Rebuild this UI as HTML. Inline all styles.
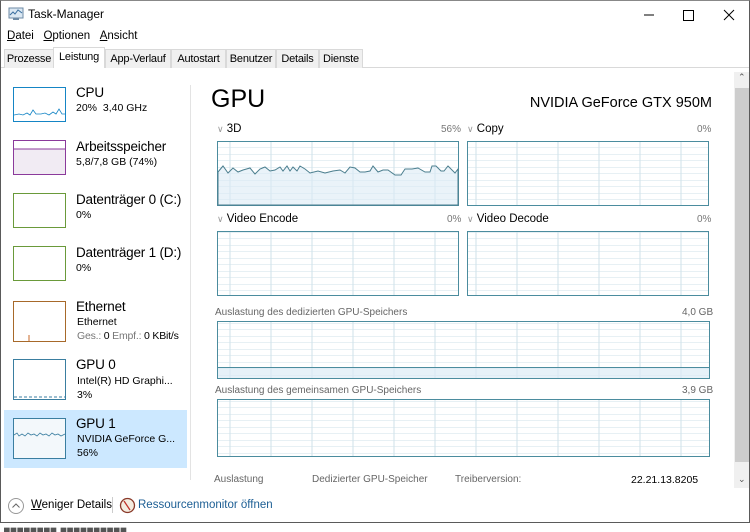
<!DOCTYPE html>
<html><head><meta charset="utf-8"><style>
*{margin:0;padding:0;box-sizing:border-box}
body{width:750px;height:528px;background:#fff;font-family:"Liberation Sans",sans-serif;color:#000;position:relative;overflow:hidden}
.a{position:absolute;white-space:nowrap}
.win{position:absolute;left:0;top:0;width:750px;height:523px;border:1px solid #5a5a5a;border-top:1px solid #888}
.tab{position:absolute;top:49px;height:19px;font-size:11px;padding-top:3px;text-align:center;border:1px solid #d9d9d9;border-bottom:none;background:#f0f0f0;letter-spacing:-0.2px}
.nm{font-size:13.5px;color:#000;letter-spacing:-0.2px}
.sb{font-size:10.5px;color:#000}
.lbl{font-size:11.5px}
.pc{font-size:10px;color:#777}
.sm{font-size:10px;color:#666}
</style></head><body>
<div class="win"></div>
<svg class="a" style="left:8px;top:7px" width="16" height="14"><rect x="1" y="1" width="14" height="10" fill="#dbe8f3" stroke="#6d8aa5"/><polyline points="2,8 5,5 7,7 10,3 14,6" fill="none" stroke="#3a6fa0"/><rect x="5" y="11" width="6" height="2" fill="#6d8aa5"/></svg>
<div class="a" style="left:28px;top:7px;font-size:12px">Task-Manager</div>
<svg class="a" style="left:640px;top:8px" width="100" height="14"><line x1="4" y1="7" x2="14" y2="7" stroke="#000"/><rect x="43.5" y="2.5" width="10" height="10" fill="none" stroke="#000"/><path d="M84 2 L94 12 M94 2 L84 12" stroke="#000"/></svg>
<div class="a" style="left:7px;top:30px;font-size:11.5px"><u>D</u>atei&nbsp;&nbsp;&nbsp;<u>O</u>ptionen&nbsp;&nbsp;&nbsp;<u>A</u>nsicht</div>
<div class="a" style="left:1px;top:67px;width:748px;height:1px;background:#d9d9d9"></div>
<div class="tab" style="left:4px;width:50px">Prozesse</div>
<div class="tab" style="left:53px;width:52px;top:47px;height:21px;background:#fff;padding-top:3px">Leistung</div>
<div class="tab" style="left:105px;width:66px">App-Verlauf</div>
<div class="tab" style="left:171px;width:55px">Autostart</div>
<div class="tab" style="left:226px;width:50px">Benutzer</div>
<div class="tab" style="left:276px;width:43px">Details</div>
<div class="tab" style="left:319px;width:44px">Dienste</div>
<div class="a" style="left:190px;top:85px;width:1px;height:395px;background:#e3e3e3"></div>
<div class="a" style="left:4px;top:410px;width:183px;height:58px;background:#cce8ff"></div>

<svg class="a" style="left:13px;top:87px" width="54" height="36"><rect x=".5" y=".5" width="52" height="34" fill="#fff" stroke="#1585c5"/><polyline points="1,28 6,27 10,28 14,26 17,28 20,23 23,27 28,27 32,26 36,28 40,25 43,27 46,22 49,27 52,27" fill="none" stroke="#1585c5" stroke-width=".8"/></svg>
<div class="a nm" style="left:76px;top:85px">CPU</div><div class="a sb" style="left:76px;top:102px">20%&nbsp; 3,40 GHz</div>

<svg class="a" style="left:13px;top:140px" width="54" height="36"><rect x=".5" y=".5" width="52" height="34" fill="#fff" stroke="#8b3a9b"/><rect x="1" y="9" width="51" height="25" fill="#f1ebf3"/><line x1="1" y1="9" x2="52" y2="9" stroke="#8b3a9b"/></svg>
<div class="a nm" style="left:76px;top:139px">Arbeitsspeicher</div><div class="a sb" style="left:76px;top:156px">5,8/7,8 GB (74%)</div>

<svg class="a" style="left:13px;top:193px" width="54" height="36"><rect x=".5" y=".5" width="52" height="34" fill="#fff" stroke="#6a9a3a"/></svg>
<div class="a nm" style="left:76px;top:192px">Datenträger 0 (C:)</div><div class="a sb" style="left:76px;top:209px">0%</div>
<svg class="a" style="left:13px;top:246px" width="54" height="36"><rect x=".5" y=".5" width="52" height="34" fill="#fff" stroke="#6a9a3a"/></svg>
<div class="a nm" style="left:76px;top:245px">Datenträger 1 (D:)</div><div class="a sb" style="left:76px;top:262px">0%</div>

<svg class="a" style="left:13px;top:301px" width="54" height="42"><rect x=".5" y=".5" width="52" height="40" fill="#fff" stroke="#a7692a"/><line x1="16" y1="34" x2="16" y2="40" stroke="#c86a2a"/></svg>
<div class="a nm" style="left:76px;top:299px">Ethernet</div><div class="a sb" style="left:77px;top:316px">Ethernet</div>
<div class="a sb" style="left:77px;top:330px;letter-spacing:-0.2px"><span style="color:#777">Ges.:</span> 0 <span style="color:#777">Empf.:</span> 0 KBit/s</div>

<svg class="a" style="left:13px;top:359px" width="54" height="42"><rect x=".5" y=".5" width="52" height="40" fill="#fff" stroke="#3a7ea0"/><line x1="1" y1="38" x2="52" y2="38" stroke="#3a7ea0" stroke-dasharray="3,2"/></svg>
<div class="a nm" style="left:76px;top:357px">GPU 0</div><div class="a sb" style="left:77px;top:375px">Intel(R) HD Graphi...</div><div class="a sb" style="left:77px;top:389px">3%</div>

<svg class="a" style="left:13px;top:418px" width="54" height="42"><rect x=".5" y=".5" width="52" height="40" fill="#f3f8fb" stroke="#3a7ea0"/><polyline points="1,17 4,15 6,18 9,16 12,18 15,15 18,17 21,16 24,18 27,15 30,17 33,16 36,18 39,15 42,17 45,16 48,18 52,16" fill="none" stroke="#3a7ea0" stroke-width=".8"/></svg>
<div class="a nm" style="left:76px;top:416px">GPU 1</div><div class="a sb" style="left:77px;top:433px">NVIDIA GeForce G...</div><div class="a sb" style="left:77px;top:447px">56%</div>

<div class="a" style="left:211px;top:85px;font-size:25px">GPU</div>
<div class="a" style="right:38px;top:95px;font-size:14.5px">NVIDIA GeForce GTX 950M</div>

<svg class="a" style="left:0;top:0" width="750" height="528">
<defs>
<pattern id="g" x="217" y="141" width="41" height="6.5" patternUnits="userSpaceOnUse"><path d="M13 0V7M0 0H41" stroke="#cfe2ea" stroke-width="1" fill="none"/></pattern>
</defs>
<g stroke="#4b8c9e" stroke-width="1">
<rect x="217.5" y="141.5" width="241" height="64" fill="url(#g)"/>
<rect x="467.5" y="141.5" width="241" height="64" fill="url(#g)"/>
<rect x="217.5" y="231.5" width="241" height="64" fill="url(#g)"/>
<rect x="467.5" y="231.5" width="241" height="64" fill="url(#g)"/>
<rect x="217.5" y="321.5" width="492" height="57" fill="url(#g)"/>
<rect x="217.5" y="399.5" width="492" height="57" fill="url(#g)"/>
</g>
<polygon points="218,172 223,166 228,173 233,168 238,172 243,170 250,168 255,174 260,169 265,167 270,171 275,170 280,167 283,171 287,166 290,171 293,167 297,171 300,166 305,169 310,173 318,171 325,173 333,171 340,170 345,173 350,167 355,168 360,172 365,172 370,171 373,166 378,172 383,170 388,170 395,175 401,175 405,169 412,169 418,168 425,172 430,172 432,166 436,166 441,171 444,171 448,166 455,173 458,169 458,205 218,205" fill="#dcebf5" fill-opacity=".6" stroke="#4b7e8e" stroke-width="1"/>
<rect x="218" y="367" width="491" height="11" fill="#dcebf5" fill-opacity=".7"/>
<line x1="218" y1="367.5" x2="709" y2="367.5" stroke="#4b8c9e"/>
</svg>
<div class="a lbl" style="left:217px;top:123px"><span style="color:#999;font-size:9px">&#8744;</span> 3D</div>
<div class="a pc" style="left:441px;top:124px">56%</div>
<div class="a lbl" style="left:467px;top:123px"><span style="color:#999;font-size:9px">&#8744;</span> Copy</div>
<div class="a pc" style="left:697px;top:124px">0%</div>
<div class="a lbl" style="left:217px;top:213px"><span style="color:#999;font-size:9px">&#8744;</span> Video Encode</div>
<div class="a pc" style="left:447px;top:214px">0%</div>
<div class="a lbl" style="left:467px;top:213px"><span style="color:#999;font-size:9px">&#8744;</span> Video Decode</div>
<div class="a pc" style="left:697px;top:214px">0%</div>
<div class="a sm" style="left:215px;top:307px">Auslastung des dedizierten GPU-Speichers</div>
<div class="a sm" style="left:682px;top:307px">4,0 GB</div>
<div class="a sm" style="left:215px;top:385px">Auslastung des gemeinsamen GPU-Speichers</div>
<div class="a sm" style="left:682px;top:385px">3,9 GB</div>
<div class="a sm" style="left:214px;top:474px">Auslastung</div>
<div class="a sm" style="left:312px;top:474px">Dedizierter GPU-Speicher</div>
<div class="a sm" style="left:455px;top:474px">Treiberversion:</div>
<div class="a" style="left:631px;top:474px;font-size:10.5px">22.21.13.8205</div>

<div class="a" style="left:734px;top:72px;width:15px;height:416px;background:#f0f0f0"></div>
<div class="a" style="left:735px;top:88px;width:14px;height:374px;background:#cdcdcd"></div>
<div class="a" style="left:738px;top:72px;font-size:9px;color:#555">&#8963;</div>
<div class="a" style="left:738px;top:474px;font-size:9px;color:#555">&#8964;</div>

<svg class="a" style="left:7px;top:497px" width="20" height="18"><circle cx="9" cy="9" r="7.5" fill="#fff" stroke="#999"/><polyline points="5.5,10.5 9,7 12.5,10.5" fill="none" stroke="#666"/></svg>
<div class="a" style="left:31px;top:499px;font-size:11.5px"><u>W</u>eniger Details</div>
<div class="a" style="left:112px;top:497px;width:1px;height:16px;background:#ccc"></div>
<svg class="a" style="left:119px;top:497px" width="18" height="18"><circle cx="8.5" cy="8.5" r="7" fill="#f4ece0" stroke="#8a3a2a" stroke-width="1.3"/><line x1="5" y1="4" x2="11" y2="13" stroke="#c0302a" stroke-width="1.3"/></svg>
<div class="a" style="left:138px;top:499px;font-size:11.5px;color:#1c5e94">Ressourcenmonitor öffnen</div>
<div class="a" style="left:4px;top:524px;font-size:8px;color:#555;letter-spacing:1px;line-height:8px">▄▄▄▄▄▄▄▄ ▄▄▄▄▄▄▄▄▄▄</div>
</body></html>
